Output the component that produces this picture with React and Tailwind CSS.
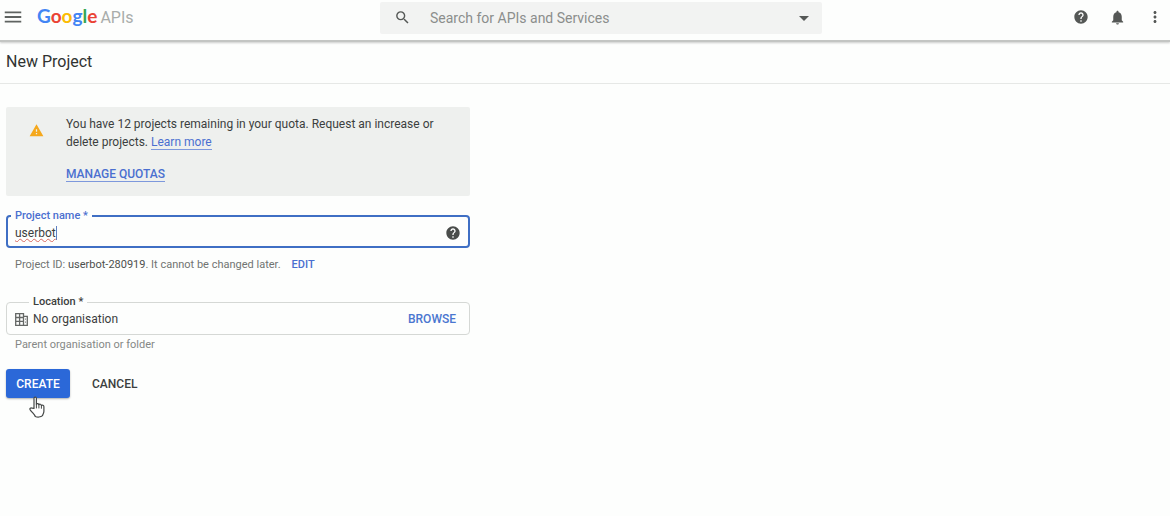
import { useState } from 'react';
import {
  MdArrowDropDown,
  MdHelp,
  MdMenu,
  MdMoreVert,
  MdNotifications,
  MdSearch,
  MdWarning,
} from 'react-icons/md';

const LOGO = [
  { letter: 'G', color: 'text-[#4285f4]' },
  { letter: 'o', color: 'text-[#ea4335]' },
  { letter: 'o', color: 'text-[#fbbc05]' },
  { letter: 'g', color: 'text-[#4285f4]' },
  { letter: 'l', color: 'text-[#34a853]' },
  { letter: 'e', color: 'text-[#ea4335]' },
];

function Header() {
  return (
    <header className="flex h-[42px] items-start border-b-2 border-[#c3c5c3] shadow-[0_1px_2px_rgba(0,0,0,0.2)]">
      <div className="flex h-[34px] w-[380px] shrink-0 items-center">
        <button type="button" aria-label="Menu" className="ml-[2px] text-[#5f6361]">
          <MdMenu size={22} />
        </button>
        <a href="#" className="ml-[13px] flex items-baseline gap-[3px] font-[Lato]">
          <span className="text-[19px] leading-6 font-bold">
            {LOGO.map(({ letter, color }, i) => (
              <span key={i} className={color}>{letter}</span>
            ))}
          </span>
          <span className="font-[Roboto] text-[16px] leading-6 text-[#a9adab]">APIs</span>
        </a>
      </div>

      <div className="mt-[2px] flex h-8 w-[442px] items-center rounded-xs bg-[#f2f3f2] pr-[6px] pb-px pl-[14px] text-[#555856]">
        <MdSearch size={17} />
        <input
          type="search"
          aria-label="Search for APIs and Services"
          placeholder="Search for APIs and Services"
          className="ml-[19px] min-w-0 flex-1 text-[14px] outline-none placeholder:text-[#8b8e8c]"
        />
        <button type="button" aria-label="Search options">
          <MdArrowDropDown size={24} />
        </button>
      </div>

      <div className="ml-auto flex h-[34px] items-center gap-5 pr-[6px] text-[#555856]">
        <button type="button" aria-label="Help"><MdHelp size={16} /></button>
        <button type="button" aria-label="Notifications"><MdNotifications size={17} /></button>
        <button type="button" aria-label="More"><MdMoreVert size={18} /></button>
      </div>
    </header>
  );
}

function QuotaNotice() {
  return (
    <section className="flex rounded-xs bg-[#eef0ee] pt-2 pr-8 pb-[13px] pl-[23px] text-[#3c403e]">
      <MdWarning size={15} className="mt-2 shrink-0 text-[#f5a81c]" />
      <div className="ml-[22px]">
        <p>
          You have 12 projects remaining in your quota. Request an increase or delete projects.{' '}
          <a href="#" className="border-b border-[#7d98dc] text-[#4a6fd0]">Learn more</a>
        </p>
        <p className="mt-[14px]">
          <a href="#" className="border-b border-[#7d98dc] font-medium text-[#4a6fd0]">MANAGE QUOTAS</a>
        </p>
      </div>
    </section>
  );
}

function OrganisationIcon() {
  return (
    <svg
      viewBox="0 0 13 13"
      className="h-[13px] w-[13px] shrink-0"
      fill="none"
      stroke="#656866"
      strokeWidth="1.3"
    >
      <path d="M.7 .7H8.5V12.3H.7ZM4.6 .7V12.3M.7 4.5H8.5M.7 8.4H8.5" />
      <path d="M8.5 3.4H12.3V12.3H8.5M10.2 6.2H11M10.2 9.2H11" />
    </svg>
  );
}

function HandCursor() {
  return (
    <svg
      viewBox="0 0 16 22"
      className="pointer-events-none absolute top-[27px] left-[23px] h-[22px] w-4"
      fill="#fff"
      stroke="#444746"
      strokeWidth="1.2"
      strokeLinejoin="round"
      strokeLinecap="round"
    >
      <path d="M5 12.5V2.3C5 .6 7.4.6 7.4 2.3V8.2C7.8 7.2 9.8 7.3 9.9 8.7C10.6 7.8 12.3 8.2 12.4 9.5C13.3 8.7 14.9 9.3 14.9 10.8V15.2C14.9 17.4 13.8 18.3 13.5 19.6C11.8 21.4 8.2 21.3 6.3 20.5C5.8 18.7 3.6 17 1.2 13.8C.3 12.5 1.8 11.4 3.1 12.2Z" />
      <path d="M7.4 8.2V12M9.9 8.7V12M12.4 9.5V12.3" fill="none" strokeWidth="1" />
    </svg>
  );
}

export default function App() {
  const [name, setName] = useState('userbot');

  return (
    <div className="min-h-screen bg-[#fdfefd] font-[Roboto,sans-serif] text-[12px] leading-[18px] text-[#3c403e]">
      <Header />
      <div className="border-b border-[#e6e8e6] px-[6px] pt-2 pb-[9px]">
        <h1 className="text-[16px] leading-6 text-[#303331]">New Project</h1>
      </div>

      <main className="w-full max-w-[476px] px-[6px] pt-[23px]">
        <QuotaNotice />

        <form onSubmit={(e) => e.preventDefault()}>
          <fieldset className="mt-3 rounded border-2 border-[#3f6fc4] px-[3px] pb-1">
            <legend className="px-1 text-[11px] leading-4 font-medium text-[#4a6fd0]">
              <label htmlFor="project-name">Project name *</label>
            </legend>
            <div className="flex h-[18px] items-center px-1">
              <input
                id="project-name"
                value={name}
                onChange={(e) => setName(e.target.value)}
                className="field-sizing-content h-[18px] underline decoration-[#d9695f] decoration-wavy decoration-1 outline-none"
              />
              <span className="h-[14px] w-px bg-[#5f7fc0]" />
              <button type="button" aria-label="About project names" className="ml-auto text-[#4a4d4b]">
                <MdHelp size={16} />
              </button>
            </div>
          </fieldset>
          <p className="mt-2 pl-[9px] text-[11px] text-[#717472]">
            Project ID: <span className="text-[#4d504e]">userbot-280919</span>. It cannot be changed later.
            <button type="button" className="ml-[11px] font-medium text-[#4a6fd0]">EDIT</button>
          </p>

          <fieldset className="mt-5 rounded border border-[#d5d8d5] px-2 pb-[6px]">
            <legend className="ml-[14px] px-1 text-[11px] leading-4 font-medium">
              <label htmlFor="location">Location *</label>
            </legend>
            <div className="flex h-[18px] items-center">
              <OrganisationIcon />
              <input
                id="location"
                readOnly
                value="No organisation"
                className="ml-[5px] min-w-0 flex-1 outline-none"
              />
              <button type="button" className="mr-[5px] font-medium text-[#4a76d0]">BROWSE</button>
            </div>
          </fieldset>
          <p className="mt-[1px] pl-[9px] text-[11px] text-[#858886]">Parent organisation or folder</p>

          <div className="relative mt-[15px] flex items-center">
            <button
              type="submit"
              className="h-[29px] w-16 rounded-[3px] bg-[#2b68d8] font-medium text-white shadow-[0_1px_2px_rgba(0,0,0,0.3)]"
            >
              CREATE
            </button>
            <button type="button" className="ml-[22px] font-medium text-[#3c403e]">CANCEL</button>
            <HandCursor />
          </div>
        </form>
      </main>
    </div>
  );
}
